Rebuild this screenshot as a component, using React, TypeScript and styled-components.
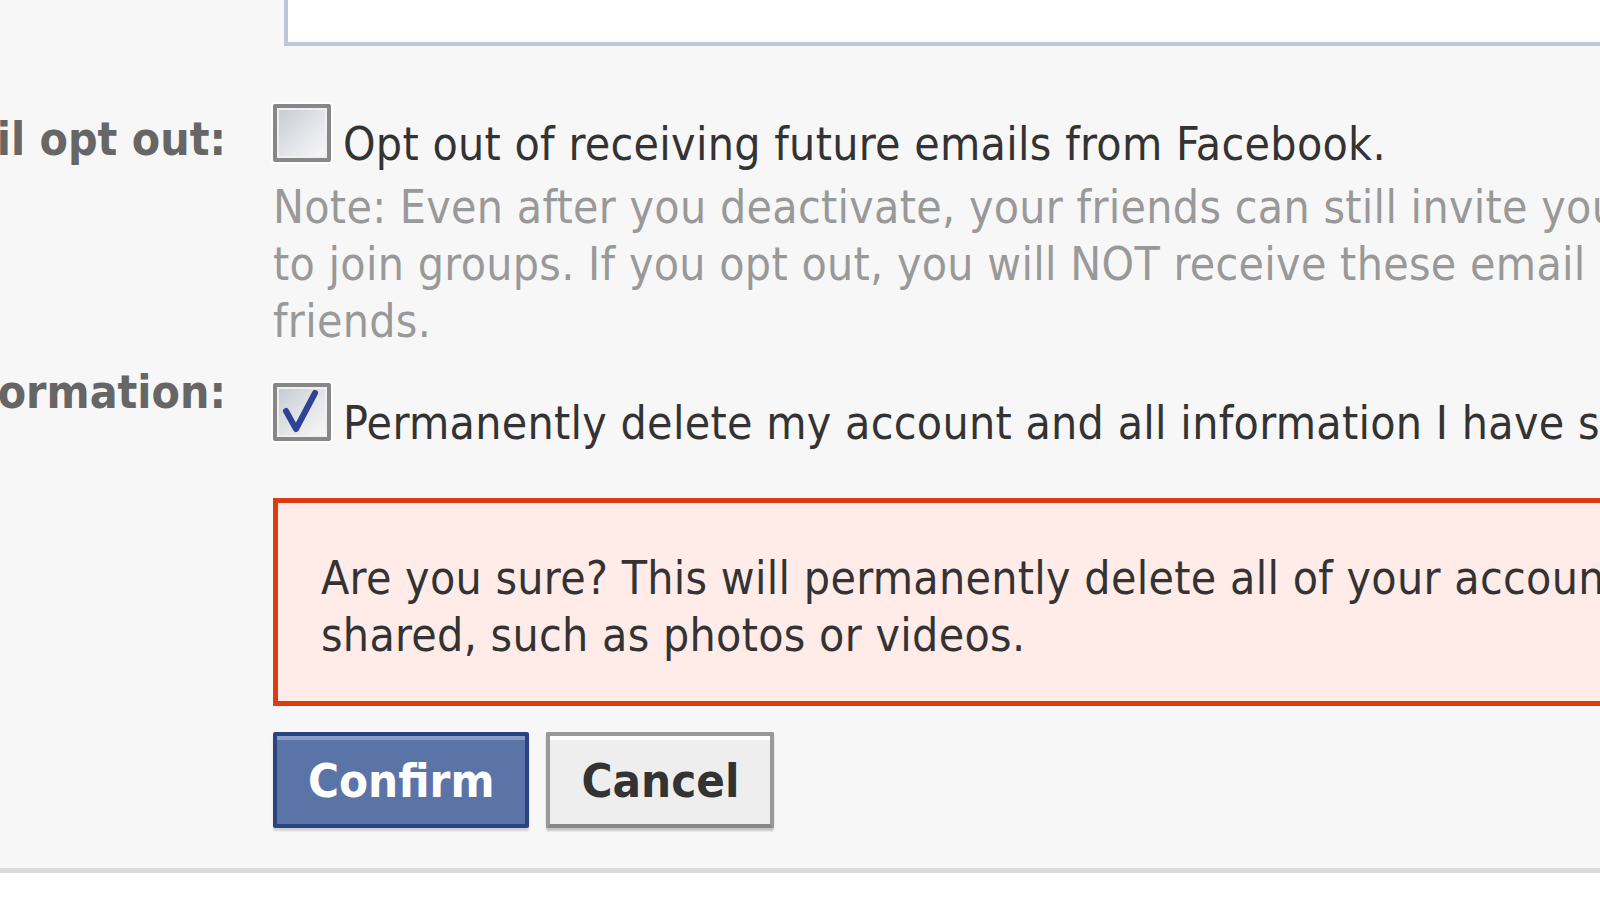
import React from "react";
import styled, { createGlobalStyle } from "styled-components";

const GlobalStyle = createGlobalStyle`
  html, body {
    margin: 0;
    padding: 0;
    background: #ffffff;
    overflow: hidden;
  }
  body {
    font-family: "DejaVu Sans Condensed", "DejaVu Sans", sans-serif;
    font-stretch: condensed;
    font-size: 46px;
    line-height: 57px;
    letter-spacing: 0.3px;
    color: #333333;
  }
`;

const Panel = styled.div`
  background: #f7f7f7;
  border-bottom: 5px solid #dadada;
  padding-bottom: 40px;
  width: 1600px;
`;

const Row = styled.div<{ $top: number }>`
  display: grid;
  grid-template-columns: 226px 1500px;
  column-gap: 47px;
  align-items: start;
  margin-top: ${({ $top }) => $top}px;
`;

const Label = styled.div<{ $pad: number }>`
  display: flex;
  justify-content: flex-end;
  white-space: nowrap;
  font-weight: bold;
  letter-spacing: 0;
  color: #666666;
  padding-top: ${({ $pad }) => $pad}px;
`;

const Field = styled.div<{ $pad?: number }>`
  padding-top: ${({ $pad }) => $pad || 0}px;
  white-space: nowrap;
`;

const Textarea = styled.textarea`
  display: block;
  margin: -60px 0 0 11px;
  width: 1500px;
  height: 106px;
  box-sizing: border-box;
  border: 4px solid #bdc7d8;
  background: #ffffff;
  resize: none;
  outline: none;
`;

const CheckLine = styled.div`
  display: flex;
  align-items: flex-start;
  gap: 12px;
`;

const Box = styled.span`
  flex: none;
  box-sizing: border-box;
  width: 58px;
  height: 58px;
  border: 4px solid #878787;
  border-radius: 2px;
  background: linear-gradient(135deg, #c6c9d2 0%, #e2e3e8 50%, #f8f8f8 100%);
  box-shadow: inset 0 0 0 2px #f0f0f0, 0 0 0 2px #ffffff;
  display: flex;
  align-items: center;
  justify-content: center;
`;

const CheckText = styled.span`
  margin-top: 12px;
  color: #333333;
`;

const Note = styled.div`
  margin-top: 6px;
  color: #999999;
`;

const Warning = styled.div`
  margin-top: 46px;
  box-sizing: border-box;
  height: 208px;
  border: 5px solid #dd3c10;
  background: #ffebe8;
  padding: 47px 0 0 43px;
  color: #333333;
`;

const Buttons = styled.div`
  display: flex;
  gap: 17px;
  margin-top: 26px;
`;

const Button = styled.button<{ $primary?: boolean }>`
  box-sizing: border-box;
  height: 96px;
  padding: 0 31px;
  font-family: inherit;
  font-stretch: condensed;
  font-size: 47px;
  font-weight: bold;
  line-height: 1;
  border-radius: 2px;
  border: 4px solid ${({ $primary }) => ($primary ? "#29447e" : "#999999")};
  border-bottom-color: ${({ $primary }) => ($primary ? "#29447e" : "#888888")};
  background: ${({ $primary }) => ($primary ? "#5b74a8" : "#eeeeee")};
  color: ${({ $primary }) => ($primary ? "#ffffff" : "#333333")};
  box-shadow: ${({ $primary }) =>
    $primary
      ? "inset 0 4px 0 #8a9cc2, 0 3px 2px rgba(0,0,0,0.15)"
      : "inset 0 4px 0 #ffffff, 0 3px 2px rgba(0,0,0,0.2)"};
  cursor: pointer;
`;

const Checkbox = ({ checked }: { checked?: boolean }) => (
  <Box>
    {checked && (
      <svg width="50" height="50" viewBox="0 0 50 50">
        <path
          d="M9 24 L19 42 L38 6"
          fill="none"
          stroke="#2f4293"
          strokeWidth="6"
          strokeLinecap="round"
          strokeLinejoin="round"
        />
      </svg>
    )}
  </Box>
);

const App = () => {
  return (
    <>
      <GlobalStyle />
      <Panel>
        <Row $top={0}>
          <div />
          <Textarea />
        </Row>
        <Row $top={58}>
          <Label $pad={7}>Email opt out:</Label>
          <Field>
            <CheckLine>
              <Checkbox />
              <CheckText>Opt out of receiving future emails from Facebook.</CheckText>
            </CheckLine>
            <Note>
              Note: Even after you deactivate, your friends can still invite you to events, tag you in photos, or ask you
              <br />
              to join groups. If you opt out, you will NOT receive these email invitations and notifications from your
              <br />
              friends.
            </Note>
          </Field>
        </Row>
        <Row $top={6}>
          <Label $pad={8}>Delete information:</Label>
          <Field $pad={27}>
            <CheckLine>
              <Checkbox checked />
              <CheckText>Permanently delete my account and all information I have shared on Facebook.</CheckText>
            </CheckLine>
            <Warning>
              Are you sure? This will permanently delete all of your account information and any content you have
              <br />
              shared, such as photos or videos.
            </Warning>
            <Buttons>
              <Button $primary>Confirm</Button>
              <Button>Cancel</Button>
            </Buttons>
          </Field>
        </Row>
      </Panel>
    </>
  );
};

export default App;
